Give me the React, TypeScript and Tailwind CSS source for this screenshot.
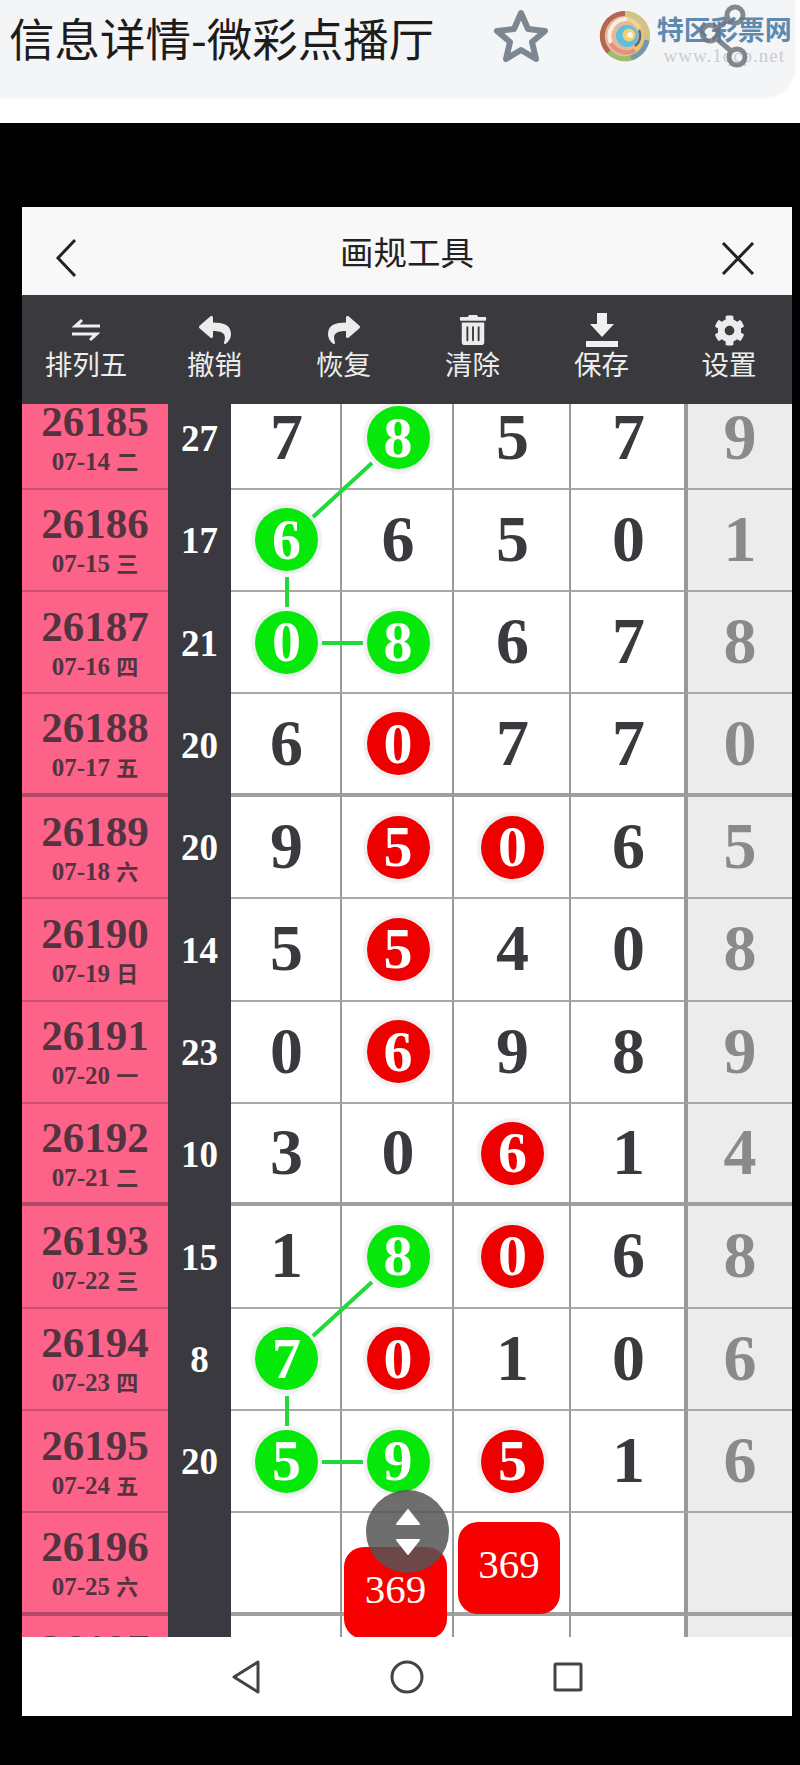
import { FaCog, FaReply, FaShare, FaTrashAlt } from 'react-icons/fa';

type Mark = 'g' | 'r' | '';

const rows: { id: string; date: string; week: string; sum: string; nums: [string, Mark][] }[] = [
  { id: '26185', date: '07-14', week: '二', sum: '27', nums: [['7', ''], ['8', 'g'], ['5', ''], ['7', ''], ['9', '']] },
  { id: '26186', date: '07-15', week: '三', sum: '17', nums: [['6', 'g'], ['6', ''], ['5', ''], ['0', ''], ['1', '']] },
  { id: '26187', date: '07-16', week: '四', sum: '21', nums: [['0', 'g'], ['8', 'g'], ['6', ''], ['7', ''], ['8', '']] },
  { id: '26188', date: '07-17', week: '五', sum: '20', nums: [['6', ''], ['0', 'r'], ['7', ''], ['7', ''], ['0', '']] },
  { id: '26189', date: '07-18', week: '六', sum: '20', nums: [['9', ''], ['5', 'r'], ['0', 'r'], ['6', ''], ['5', '']] },
  { id: '26190', date: '07-19', week: '日', sum: '14', nums: [['5', ''], ['5', 'r'], ['4', ''], ['0', ''], ['8', '']] },
  { id: '26191', date: '07-20', week: '一', sum: '23', nums: [['0', ''], ['6', 'r'], ['9', ''], ['8', ''], ['9', '']] },
  { id: '26192', date: '07-21', week: '二', sum: '10', nums: [['3', ''], ['0', ''], ['6', 'r'], ['1', ''], ['4', '']] },
  { id: '26193', date: '07-22', week: '三', sum: '15', nums: [['1', ''], ['8', 'g'], ['0', 'r'], ['6', ''], ['8', '']] },
  { id: '26194', date: '07-23', week: '四', sum: '8', nums: [['7', 'g'], ['0', 'r'], ['1', ''], ['0', ''], ['6', '']] },
  { id: '26195', date: '07-24', week: '五', sum: '20', nums: [['5', 'g'], ['9', 'g'], ['5', 'r'], ['1', ''], ['6', '']] },
  { id: '26196', date: '07-25', week: '六', sum: '', nums: [['', ''], ['', ''], ['', ''], ['', ''], ['', '']] },
  { id: '26197', date: '07-26', week: '日', sum: '', nums: [['', ''], ['', ''], ['', ''], ['', ''], ['', '']] },
];

const colWidths = ['w-[111px]', 'w-[112px]', 'w-[117px]', 'w-[113px]'];

const Cell = ({ value, mark }: { value: string; mark: Mark }) => {
  if (mark === '') return <span className="pb-[2px] text-[66px] leading-none font-bold text-[#3a3a3e]">{value}</span>;
  return (
    <span
      className={`flex h-[63px] w-[63px] items-center justify-center rounded-full text-[58px] leading-none font-bold text-white shadow-[0_0_2px_4px_#f0f0f3] ${mark === 'g' ? 'bg-[#05e80a]' : 'bg-[#ee0000]'}`}
    >
      {value}
    </span>
  );
};

const Row = ({ row, index }: { row: (typeof rows)[number]; index: number }) => {
  const thick = index % 4 === 3;
  return (
    <div className="flex h-[102.36px]">
      <div
        className={`flex w-[146px] flex-col items-center justify-center bg-[#fd6288] pt-[10px] text-[#523440] ${thick ? 'border-b-4 border-b-[#b5486a]' : 'border-b-2 border-b-[#c9506f]'}`}
      >
        <div className="text-[43px] leading-[40px] font-bold">{row.id}</div>
        <div className="text-[25px] leading-[40px] font-bold">
          {row.date} <span className="text-[22px]">{row.week}</span>
        </div>
      </div>
      <div className="flex w-[63px] items-center justify-center bg-[#39393f] text-[37px] font-bold text-white">{row.sum}</div>
      {row.nums.slice(0, 4).map((n, i) => (
        <div
          key={i}
          className={`flex items-center justify-center bg-white pl-[2px] ${colWidths[i]} ${i < 3 ? 'border-r-2 border-r-[#999999]' : ''} ${thick ? 'border-b-4 border-b-[#a0a0a0]' : 'border-b-2 border-b-[#a8a8a8]'}`}
        >
          <Cell value={n[0]} mark={n[1]} />
        </div>
      ))}
      <div
        className={`flex w-[108px] items-center justify-center border-l-4 border-l-[#999999] bg-[#ececec] pb-[2px] text-[66px] leading-none font-bold text-[#8a8a8a] ${thick ? 'border-b-4 border-b-[#a0a0a0]' : 'border-b-2 border-b-[#a8a8a8]'}`}
      >
        {row.nums[4][0]}
      </div>
    </div>
  );
};

const SwapIcon = () => (
  <svg width="30" height="24" viewBox="0 0 30 24" fill="#f0f0f0">
    <path d="M1 9 10 1l2 2-3.5 3.500H29V9.500H1Z" />
    <path d="M29 15 20 23l-2-2 3.500-3.500H1V14.500h28Z" />
  </svg>
);

const DownloadIcon = () => (
  <svg width="34" height="34" viewBox="0 0 34 34" fill="#f0f0f0">
    <path d="M12 0h10v11h7L17 24 5 11h7Z" />
    <rect x="1" y="28" width="32" height="6" />
  </svg>
);

const tools = [
  { label: '排列五', icon: <SwapIcon /> },
  { label: '撤销', icon: <FaReply size={32} /> },
  { label: '恢复', icon: <FaShare size={32} /> },
  { label: '清除', icon: <FaTrashAlt size={30} /> },
  { label: '保存', icon: <DownloadIcon /> },
  { label: '设置', icon: <FaCog size={31} /> },
];

// blurry swirl logo
const Logo = () => (
  <svg width="52" height="52" viewBox="0 0 52 52" fill="none" className="blur-[0.7px]">
    <circle cx="26" cy="26" r="25" fill="#e4b9a0" />
    <path d="M26 3.500A22.500 22.500 0 0 0 10 42" stroke="#b4674f" strokeWidth="5" />
    <path d="M10 42A22.500 22.500 0 0 0 32 48" stroke="#9bbd6d" strokeWidth="5" />
    <path d="M32 48A22.500 22.500 0 0 0 48 30" stroke="#6f9aa6" strokeWidth="5" />
    <path d="M48 30A22.500 22.500 0 0 0 26 3.500" stroke="#cfc483" strokeWidth="5" />
    <path d="M28 9A17 17 0 0 0 12 33" stroke="#f6eee2" strokeWidth="4" />
    <path d="M12 33A17 17 0 0 0 36 40" stroke="#e88f76" strokeWidth="4" />
    <path d="M36 40A17 17 0 0 0 40 18" stroke="#f0c766" strokeWidth="4" />
    <path d="M40 18A17 17 0 0 0 28 9" stroke="#ecd88f" strokeWidth="4" />
    <circle cx="28" cy="26" r="11" fill="#5fc0d8" />
    <circle cx="30" cy="25" r="6.500" fill="#f0d27a" />
    <circle cx="31" cy="25" r="3" fill="#f8f4e6" />
    <path d="M40 20A13 13 0 0 1 36 36" stroke="#4a6f8c" strokeWidth="2.500" />
  </svg>
);

const ShareIcon = () => (
  <svg width="58" height="66" viewBox="0 0 58 66" fill="none" stroke="#6d7680" strokeWidth="5" opacity="0.85">
    <circle cx="36" cy="11" r="8" />
    <circle cx="11" cy="29" r="8" />
    <circle cx="38" cy="53" r="8" />
    <path d="M29 16 18 24M18 35l14 12" />
  </svg>
);

export default function App() {
  return (
    <div className="h-[1765px] w-[800px] overflow-hidden bg-black font-['Noto_Sans_CJK_SC',sans-serif]">
      <div className="h-[123px] bg-white">
        <div className="relative flex h-[97px] w-[795px] items-start rounded-br-[30px] bg-[#f4f5f6] pl-[9px] shadow-[0_1px_3px_#f4f5f6]">
          <h1 className="mt-[8px] text-[45.500px] leading-[58px] font-normal whitespace-nowrap text-[#1c1c1c]">信息详情-微彩点播厅</h1>
          <svg width="56" height="54" viewBox="0 0 56 54" fill="none" stroke="#7c8791" strokeWidth="6" strokeLinejoin="round" className="mt-[9px] ml-[59px]">
            <path d="M28 4 35 20 52 22 39 33 43 50 28 41 13 50 17 33 4 22 21 20Z" />
          </svg>
          <div className="mt-[10px] ml-[50px]">
            <Logo />
          </div>
          <div className="mt-[12px] ml-[6px] flex w-[134px] flex-col items-center">
            <div className="text-[27px] leading-[34px] font-bold whitespace-nowrap text-[#5f8ab0]">特区彩票网</div>
            <div className="font-['Liberation_Serif',serif] text-[19px] leading-[20px] tracking-[1px] whitespace-nowrap text-[#c9cdd2]">www.1qcp.net</div>
          </div>
          <div className="absolute top-[4px] left-[699px]">
            <ShareIcon />
          </div>
        </div>
      </div>

      <div className="mt-[84px] ml-[22px] w-[770px]">
        <div className="flex h-[88px] items-center bg-[#f8f8f9] pr-[37px] pl-[33px]">
          <div className="flex-1 pt-[14px]">
            <svg width="22" height="40" viewBox="0 0 22 40" fill="none" stroke="#222" strokeWidth="3">
              <path d="M20 2 3 20l17 18" />
            </svg>
          </div>
          <div className="pl-[4px] text-[33.500px] leading-none text-[#222]">画规工具</div>
          <div className="flex flex-1 justify-end pt-[14px]">
            <svg width="34" height="33" viewBox="0 0 34 33" fill="none" stroke="#222" strokeWidth="3">
              <path d="M2 1 32 32M32 1 2 32" />
            </svg>
          </div>
        </div>

        <div className="grid h-[109px] grid-cols-[128px_repeat(4,129px)_126px] bg-[#3a3a3e] text-[#ececec]">
          {tools.map((t) => (
            <div key={t.label} className="flex flex-col items-center pt-[18px] whitespace-nowrap">
              <div className="flex h-[34px] items-center">{t.icon}</div>
              <div className="text-[27.500px] leading-[32px]">{t.label}</div>
            </div>
          ))}
        </div>

        <div className="relative h-[1233px] overflow-hidden font-['Liberation_Serif','Noto_Sans_CJK_SC',serif]">
          <div className="-mt-[16.600px]">
            {rows.map((row, i) => (
              <Row key={row.id} row={row} index={i} />
            ))}
          </div>

          <svg width="770" height="1233" viewBox="0 0 770 1233" fill="none" stroke="#22d93a" strokeWidth="4" className="absolute top-0 left-0">
            <path d="M350 59 291 113M265 173V203M300 239H341" />
            <path d="M350 878 291 932M265 992V1022M300 1058H341" />
          </svg>

          <div className="absolute top-[1143px] left-[322px] flex h-[92px] w-[103px] items-center justify-center rounded-[20px] bg-[#f90000] pb-[6px] text-[41px] text-white">369</div>
          <div className="absolute top-[1118px] left-[436px] flex h-[92px] w-[102px] items-center justify-center rounded-[20px] bg-[#f90000] pb-[6px] text-[41px] text-white">369</div>

          <div className="absolute top-[1086px] left-[344px] flex h-[83px] w-[83px] flex-col items-center justify-center gap-[12px] rounded-full bg-[#555555]/85">
            <svg width="26" height="18" viewBox="0 0 26 18" fill="#fff" stroke="#fff" strokeWidth="2" strokeLinejoin="round">
              <path d="M13 2 24 16H2Z" />
            </svg>
            <svg width="26" height="18" viewBox="0 0 26 18" fill="#fff" stroke="#fff" strokeWidth="2" strokeLinejoin="round">
              <path d="M13 16 24 2H2Z" />
            </svg>
          </div>
        </div>

        <div className="flex h-[79px] items-center justify-center gap-[129px] bg-white pr-[1px]">
          <svg width="30" height="34" viewBox="0 0 30 34" fill="none" stroke="#444" strokeWidth="3" strokeLinejoin="round">
            <path d="M27 2V32L3 17Z" />
          </svg>
          <svg width="34" height="34" viewBox="0 0 34 34" fill="none" stroke="#444" strokeWidth="3">
            <circle cx="17" cy="17" r="15" />
          </svg>
          <svg width="30" height="30" viewBox="0 0 30 30" fill="none" stroke="#444" strokeWidth="3" strokeLinejoin="round">
            <rect x="2" y="2" width="26" height="26" rx="1" />
          </svg>
        </div>
      </div>
    </div>
  );
}
